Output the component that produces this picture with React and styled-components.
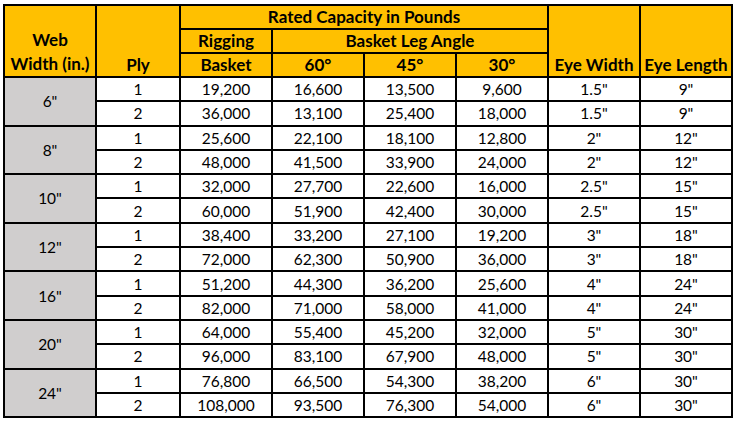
import React from 'react';
import styled, { createGlobalStyle } from 'styled-components';

const GlobalStyle = createGlobalStyle`
  html, body {
    margin: 0;
    padding: 0;
    background: #ffffff;
  }
  body {
    font-family: Lato, "Open Sans", "Liberation Sans", sans-serif;
    color: #000;
  }
`;

const Page = styled.div`
  padding: 4px 0 0 3px;
`;

const Table = styled.table`
  border-collapse: collapse;
  table-layout: fixed;
  width: 728px;
  border: 2px solid #000;
  font-size: 15.5px;
`;

const HeadRow = styled.tr`
  height: 24px;
`;

const BodyRow = styled.tr`
  height: 24.3px;
`;

const HeadCell = styled.th`
  background: #ffc000;
  border: 2px solid #000;
  padding: 0;
  font-size: 17px;
  font-weight: 700;
  line-height: 22px;
  text-align: center;
  vertical-align: ${(p) => (p.$bottom ? 'bottom' : 'middle')};
  white-space: nowrap;
`;

const StackedLine = styled.span`
  display: block;
  line-height: 24px;
`;

const Cell = styled.td`
  border: 2px solid #000;
  padding: 0;
  text-align: center;
  vertical-align: middle;
  line-height: 20px;
  white-space: nowrap;
`;

const WidthCell = styled(Cell)`
  background: #d0cece;
`;

const columns = [92, 84, 92, 92, 92, 92, 92, 92];

const rows = [
  { width: '6"', eye: '1.5"', length: '9"', plies: [
    ['19,200', '16,600', '13,500', '9,600'],
    ['36,000', '13,100', '25,400', '18,000'],
  ] },
  { width: '8"', eye: '2"', length: '12"', plies: [
    ['25,600', '22,100', '18,100', '12,800'],
    ['48,000', '41,500', '33,900', '24,000'],
  ] },
  { width: '10"', eye: '2.5"', length: '15"', plies: [
    ['32,000', '27,700', '22,600', '16,000'],
    ['60,000', '51,900', '42,400', '30,000'],
  ] },
  { width: '12"', eye: '3"', length: '18"', plies: [
    ['38,400', '33,200', '27,100', '19,200'],
    ['72,000', '62,300', '50,900', '36,000'],
  ] },
  { width: '16"', eye: '4"', length: '24"', plies: [
    ['51,200', '44,300', '36,200', '25,600'],
    ['82,000', '71,000', '58,000', '41,000'],
  ] },
  { width: '20"', eye: '5"', length: '30"', plies: [
    ['64,000', '55,400', '45,200', '32,000'],
    ['96,000', '83,100', '67,900', '48,000'],
  ] },
  { width: '24"', eye: '6"', length: '30"', plies: [
    ['76,800', '66,500', '54,300', '38,200'],
    ['108,000', '93,500', '76,300', '54,000'],
  ] },
];

function App() {
  return (
    <Page>
      <GlobalStyle />
      <Table>
        <colgroup>
          {columns.map((w, i) => (
            <col key={i} style={{ width: w }} />
          ))}
        </colgroup>
        <thead>
          <HeadRow>
            <HeadCell rowSpan={3} $bottom>
              <StackedLine>Web</StackedLine>
              <StackedLine>Width (in.)</StackedLine>
            </HeadCell>
            <HeadCell rowSpan={3} $bottom>Ply</HeadCell>
            <HeadCell colSpan={4}>Rated Capacity in Pounds</HeadCell>
            <HeadCell rowSpan={3} $bottom>Eye Width</HeadCell>
            <HeadCell rowSpan={3} $bottom>Eye Length</HeadCell>
          </HeadRow>
          <HeadRow>
            <HeadCell>Rigging</HeadCell>
            <HeadCell colSpan={3}>Basket Leg Angle</HeadCell>
          </HeadRow>
          <HeadRow>
            <HeadCell>Basket</HeadCell>
            <HeadCell>60°</HeadCell>
            <HeadCell>45°</HeadCell>
            <HeadCell>30°</HeadCell>
          </HeadRow>
        </thead>
        <tbody>
          {rows.map((group) =>
            group.plies.map((values, i) => (
              <BodyRow key={group.width + i}>
                {i === 0 && <WidthCell rowSpan={2}>{group.width}</WidthCell>}
                <Cell>{i + 1}</Cell>
                {values.map((v, j) => (
                  <Cell key={j}>{v}</Cell>
                ))}
                <Cell>{group.eye}</Cell>
                <Cell>{group.length}</Cell>
              </BodyRow>
            ))
          )}
        </tbody>
      </Table>
    </Page>
  );
}

export default App;
